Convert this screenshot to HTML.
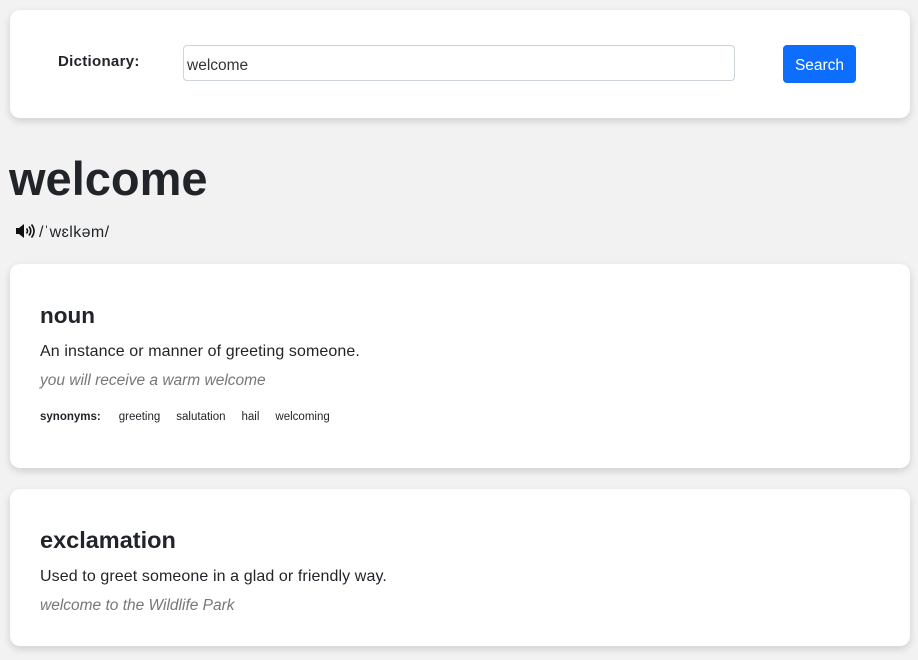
<!DOCTYPE html>
<html><head><style>
*{box-sizing:border-box;margin:0;padding:0}
body{width:918px;height:660px;background:#f2f2f2;font-family:"Liberation Sans",sans-serif;color:#212529;position:relative;overflow:hidden}
.card{position:absolute;left:10px;width:900px;background:#fff;border-radius:10px;box-shadow:0 3px 8px rgba(0,0,0,.15)}
.abs{position:absolute;white-space:nowrap}
</style></head><body>
<div class="card" style="top:10px;height:108px">
  <div class="abs" style="left:48px;top:43px;font-weight:bold;font-size:15px;letter-spacing:0.3px">Dictionary:</div>
  <div class="abs" style="left:173px;top:35px;width:552px;height:36px;border:1px solid #ced4da;border-radius:4px;font-size:15.5px;padding:11px 3px 0;color:#333">welcome</div>
  <div class="abs" style="left:773px;top:35px;width:73px;height:38px;background:#0d6efd;border-radius:4px;color:#fff;font-size:15.5px;text-align:center;line-height:41px">Search</div>
</div>
<div class="abs" style="left:9px;top:151px;font-size:47px;font-weight:bold">welcome</div>
<svg class="abs" style="left:15px;top:223px" width="20" height="16" viewBox="0 0 20 16"><path d="M1 5h3l5-4v14l-5-4H1z" fill="#111"/><path d="M11.5 5.5q2 2.5 0 5M14 3.5q3.5 4.5 0 9M16.5 1.5q5 6.5 0 13" stroke="#111" stroke-width="1.6" fill="none"/></svg>
<div class="abs" style="left:39px;top:224px;font-size:16px;letter-spacing:0.4px">/ˈwɛlkəm/</div>
<div class="card" style="top:264px;height:204px">
  <div class="abs" style="left:30px;top:39px;font-size:22.5px;font-weight:bold">noun</div>
  <div class="abs" style="left:30px;top:79px;font-size:16px;letter-spacing:0.1px">An instance or manner of greeting someone.</div>
  <div class="abs" style="left:30px;top:108px;font-size:15.5px;font-style:italic;color:#777">you will receive a warm welcome</div>
  <div class="abs" style="left:30px;top:147px;font-size:11.5px"><b>synonyms:</b><span style="margin-left:18px">greeting</span><span style="margin-left:16px">salutation</span><span style="margin-left:16px">hail</span><span style="margin-left:16px">welcoming</span></div>
</div>
<div class="card" style="top:489px;height:157px">
  <div class="abs" style="left:30px;top:38px;font-size:23.5px;font-weight:bold">exclamation</div>
  <div class="abs" style="left:30px;top:79px;font-size:16px;letter-spacing:0.1px">Used to greet someone in a glad or friendly way.</div>
  <div class="abs" style="left:30px;top:108px;font-size:15.5px;font-style:italic;color:#777">welcome to the Wildlife Park</div>
</div>
</body></html>
